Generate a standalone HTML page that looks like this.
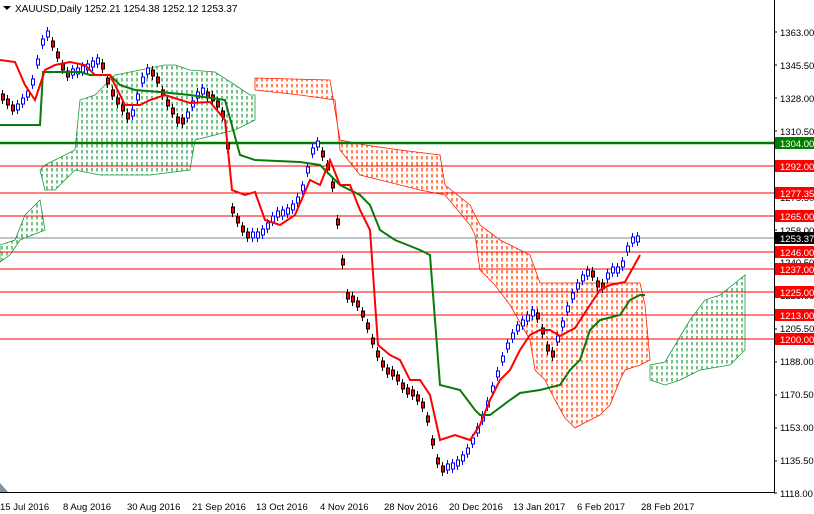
<!DOCTYPE html>
<html><head><meta charset="utf-8"><style>
html,body{margin:0;padding:0;background:#fff;}
svg{display:block;font-family:"Liberation Sans",sans-serif;}
</style></head><body>
<svg width="814" height="514" xmlns="http://www.w3.org/2000/svg">
<defs>
<pattern id="po" width="5" height="6" patternUnits="userSpaceOnUse"><line x1="2" y1="0" x2="2" y2="3.5" stroke="#ff4500" stroke-width="1.3"/></pattern>
<pattern id="pg" width="5" height="6" patternUnits="userSpaceOnUse"><line x1="2" y1="0" x2="2" y2="3.5" stroke="#1a9a3a" stroke-width="1.2"/></pattern>
</defs>
<rect width="814" height="514" fill="#fff"/>
<polygon fill="url(#pg)" stroke="#1a9a3a" stroke-width="0.8" points="40,170 45,165 75,150 80,100 95,95 115,75 140,70 165,65 175,65 190,70 215,72 235,85 250,95 255,95 255,120 235,130 195,140 190,170 150,175 100,175 75,170 55,190 45,190"/>
<polygon fill="url(#pg)" stroke="#1a9a3a" stroke-width="0.8" points="0,245 15,240 25,215 40,200 45,230 20,240 10,255 0,262"/>
<polygon fill="url(#po)" stroke="#ff2000" stroke-width="0.8" points="255,78 330,80 340,140 365,145 400,150 440,155 445,185 470,205 480,225 500,240 530,255 540,283 640,283 645,305 650,360 640,365 625,370 620,380 610,405 600,415 590,420 575,428 565,418 555,400 545,380 535,370 530,340 510,305 495,285 480,270 475,235 470,225 445,195 420,190 380,180 360,175 340,150 335,100 300,95 255,90"/>
<polygon fill="url(#pg)" stroke="#1a9a3a" stroke-width="0.8" points="650,365 665,362 690,320 705,300 720,295 745,275 745,350 730,365 700,370 680,380 665,385 650,380"/>
<g stroke="#ff0000" stroke-width="1">
<line x1="0" y1="166" x2="775" y2="166"/><line x1="0" y1="193" x2="775" y2="193"/>
<line x1="0" y1="216" x2="775" y2="216"/><line x1="0" y1="252" x2="775" y2="252"/>
<line x1="0" y1="269" x2="775" y2="269"/><line x1="0" y1="292" x2="775" y2="292"/>
<line x1="0" y1="315" x2="775" y2="315"/><line x1="0" y1="339" x2="775" y2="339"/>
</g>
<line x1="0" y1="143" x2="775" y2="143" stroke="#007a00" stroke-width="2.5"/>
<line x1="0" y1="238" x2="775" y2="238" stroke="#7a8a99" stroke-width="1"/>
<!-- candles -->
<path fill="none" stroke="#000" d="M2.5 90v14M7.5 95v14M12.5 101v14M52.5 37v14M57.5 48v14M62.5 60v14M67.5 67v14M102.5 59v14M107.5 74v14M112.5 86v14M117.5 94v14M122.5 101v14M127.5 109v14M152.5 66v14M157.5 73v14M162.5 86v14M167.5 96v14M172.5 104v14M177.5 113v14M182.5 114v14M207.5 88v14M212.5 91v14M217.5 97v14M222.5 107v14M227.5 139v14M232.5 203v14M237.5 213v14M242.5 222v14M247.5 228v14M322.5 147v14M327.5 160v14M332.5 178v14M337.5 215v14M342.5 255v14M347.5 289v14M352.5 292v14M357.5 297v14M362.5 307v14M367.5 319v14M372.5 334v14M377.5 347v14M382.5 357v14M387.5 364v14M392.5 366v14M397.5 371v14M402.5 379v14M407.5 384v14M412.5 386v14M417.5 391v14M422.5 398v14M427.5 412v14M432.5 435v14M437.5 454v14M442.5 462v14M537.5 309v14M542.5 324v14M547.5 341v14M552.5 347v14M592.5 267v14M597.5 277v14M602.5 279v14"/>
<path fill="#ff0000" stroke="#000" d="M1.5 94h3v6h-3zM6.5 99h3v6h-3zM11.5 105h3v6h-3zM51.5 41h3v6h-3zM56.5 52h3v6h-3zM61.5 64h3v6h-3zM66.5 71h3v6h-3zM101.5 63h3v6h-3zM106.5 78h3v6h-3zM111.5 90h3v6h-3zM116.5 98h3v6h-3zM121.5 105h3v6h-3zM126.5 113h3v6h-3zM151.5 70h3v6h-3zM156.5 77h3v6h-3zM161.5 90h3v6h-3zM166.5 100h3v6h-3zM171.5 108h3v6h-3zM176.5 117h3v6h-3zM181.5 118h3v6h-3zM206.5 92h3v6h-3zM211.5 95h3v6h-3zM216.5 101h3v6h-3zM221.5 111h3v6h-3zM226.5 143h3v6h-3zM231.5 207h3v6h-3zM236.5 217h3v6h-3zM241.5 226h3v6h-3zM246.5 232h3v6h-3zM321.5 151h3v6h-3zM326.5 164h3v6h-3zM331.5 182h3v6h-3zM336.5 219h3v6h-3zM341.5 259h3v6h-3zM346.5 293h3v6h-3zM351.5 296h3v6h-3zM356.5 301h3v6h-3zM361.5 311h3v6h-3zM366.5 323h3v6h-3zM371.5 338h3v6h-3zM376.5 351h3v6h-3zM381.5 361h3v6h-3zM386.5 368h3v6h-3zM391.5 370h3v6h-3zM396.5 375h3v6h-3zM401.5 383h3v6h-3zM406.5 388h3v6h-3zM411.5 390h3v6h-3zM416.5 395h3v6h-3zM421.5 402h3v6h-3zM426.5 416h3v6h-3zM431.5 439h3v6h-3zM436.5 458h3v6h-3zM441.5 466h3v6h-3zM536.5 313h3v6h-3zM541.5 328h3v6h-3zM546.5 345h3v6h-3zM551.5 351h3v6h-3zM591.5 271h3v6h-3zM596.5 281h3v6h-3zM601.5 283h3v6h-3z"/>
<path fill="none" stroke="#0000ff" d="M17.5 100v14M22.5 94v14M27.5 87v14M32.5 75v14M37.5 55v14M42.5 35v14M47.5 27v14M72.5 65v14M77.5 64v14M82.5 62v14M87.5 60v14M92.5 57v14M97.5 54v14M132.5 106v14M137.5 90v14M142.5 73v14M147.5 64v14M187.5 108v14M192.5 97v14M197.5 88v14M202.5 84v14M252.5 228v14M257.5 228v14M262.5 225v14M267.5 219v14M272.5 212v14M277.5 207v14M282.5 206v14M287.5 204v14M292.5 200v14M297.5 193v14M302.5 181v14M307.5 163v14M312.5 144v14M317.5 137v14M447.5 460v14M452.5 459v14M457.5 456v14M462.5 451v14M467.5 444v14M472.5 434v14M477.5 423v14M482.5 411v14M487.5 397v14M492.5 382v14M497.5 367v14M502.5 352v14M507.5 339v14M512.5 329v14M517.5 321v14M522.5 316v14M527.5 311v14M532.5 306v14M557.5 332v14M562.5 317v14M567.5 302v14M572.5 289v14M577.5 279v14M582.5 271v14M587.5 266v14M607.5 269v14M612.5 263v14M617.5 263v14M622.5 257v14M627.5 242v14M632.5 233v14M637.5 232v14"/>
<path fill="#fff" stroke="#0000ff" d="M16.5 104h3v6h-3zM21.5 98h3v6h-3zM26.5 91h3v6h-3zM31.5 79h3v6h-3zM36.5 59h3v6h-3zM41.5 39h3v6h-3zM46.5 31h3v6h-3zM71.5 69h3v6h-3zM76.5 68h3v6h-3zM81.5 66h3v6h-3zM86.5 64h3v6h-3zM91.5 61h3v6h-3zM96.5 58h3v6h-3zM131.5 110h3v6h-3zM136.5 94h3v6h-3zM141.5 77h3v6h-3zM146.5 68h3v6h-3zM186.5 112h3v6h-3zM191.5 101h3v6h-3zM196.5 92h3v6h-3zM201.5 88h3v6h-3zM251.5 232h3v6h-3zM256.5 232h3v6h-3zM261.5 229h3v6h-3zM266.5 223h3v6h-3zM271.5 216h3v6h-3zM276.5 211h3v6h-3zM281.5 210h3v6h-3zM286.5 208h3v6h-3zM291.5 204h3v6h-3zM296.5 197h3v6h-3zM301.5 185h3v6h-3zM306.5 167h3v6h-3zM311.5 148h3v6h-3zM316.5 141h3v6h-3zM446.5 464h3v6h-3zM451.5 463h3v6h-3zM456.5 460h3v6h-3zM461.5 455h3v6h-3zM466.5 448h3v6h-3zM471.5 438h3v6h-3zM476.5 427h3v6h-3zM481.5 415h3v6h-3zM486.5 401h3v6h-3zM491.5 386h3v6h-3zM496.5 371h3v6h-3zM501.5 356h3v6h-3zM506.5 343h3v6h-3zM511.5 333h3v6h-3zM516.5 325h3v6h-3zM521.5 320h3v6h-3zM526.5 315h3v6h-3zM531.5 310h3v6h-3zM556.5 336h3v6h-3zM561.5 321h3v6h-3zM566.5 306h3v6h-3zM571.5 293h3v6h-3zM576.5 283h3v6h-3zM581.5 275h3v6h-3zM586.5 270h3v6h-3zM606.5 273h3v6h-3zM611.5 267h3v6h-3zM616.5 267h3v6h-3zM621.5 261h3v6h-3zM626.5 246h3v6h-3zM631.5 237h3v6h-3zM636.5 236h3v6h-3z"/>
<polyline fill="none" stroke="#0a7a0a" stroke-width="2" points="0,125 40,125 43,72 55,72 80,72 90,75 110,75 120,85 135,90 160,92 190,95 225,100 240,155 255,160 300,162 320,165 340,185 360,195 370,205 380,230 395,240 420,250 430,255 440,385 460,390 475,410 480,415 490,415 510,400 520,393 540,390 560,385 570,370 580,360 590,330 600,320 620,315 630,300 640,295 645,295"/>
<polyline fill="none" stroke="#ff0000" stroke-width="2" points="0,60 15,62 25,85 35,100 45,70 55,65 70,62 85,65 95,75 110,75 125,105 140,105 150,100 165,95 190,103 210,102 225,120 232,190 245,195 255,192 265,220 280,225 295,215 310,180 320,185 330,160 340,185 350,185 360,210 370,230 378,345 390,355 400,360 410,380 420,380 430,395 440,440 455,435 470,440 480,425 490,400 500,380 510,370 520,350 530,335 540,330 550,330 560,336 575,328 590,305 600,290 610,285 625,282 640,255"/>
<line x1="774.5" y1="0" x2="774.5" y2="493" stroke="#000"/>
<line x1="0" y1="492.5" x2="775" y2="492.5" stroke="#000"/>
<g font-size="9.5" fill="#000">
<text x="780" y="36">1363.00</text><text x="780" y="69">1345.50</text><text x="780" y="102">1328.00</text><text x="780" y="135">1310.50</text><text x="780" y="201">1275.50</text><text x="780" y="234">1258.00</text><text x="780" y="266">1240.50</text><text x="780" y="299">1223.00</text><text x="780" y="332">1205.50</text><text x="780" y="365">1188.00</text><text x="780" y="398">1170.50</text><text x="780" y="431">1153.00</text><text x="780" y="464">1135.50</text><text x="780" y="497">1118.00</text>
</g>
<g stroke="#000"><line x1="774" y1="32" x2="777" y2="32"/><line x1="774" y1="65" x2="777" y2="65"/><line x1="774" y1="98" x2="777" y2="98"/><line x1="774" y1="131" x2="777" y2="131"/><line x1="774" y1="230" x2="777" y2="230"/><line x1="774" y1="329" x2="777" y2="329"/><line x1="774" y1="362" x2="777" y2="362"/><line x1="774" y1="395" x2="777" y2="395"/><line x1="774" y1="428" x2="777" y2="428"/><line x1="774" y1="461" x2="777" y2="461"/><line x1="774" y1="493" x2="777" y2="493"/></g>
<g font-size="9.5" fill="#fff">
<rect x="775" y="137" width="39" height="12" fill="#008000"/><text x="780" y="147">1304.00</text>
<rect x="775" y="160" width="39" height="12" fill="#ff0000"/><text x="780" y="170">1292.00</text>
<rect x="775" y="187" width="39" height="12" fill="#ff0000"/><text x="780" y="197">1277.35</text>
<rect x="775" y="210" width="39" height="12" fill="#ff0000"/><text x="780" y="220">1265.00</text>
<rect x="775" y="232" width="39" height="12" fill="#000"/><text x="780" y="242">1253.37</text>
<rect x="775" y="246" width="39" height="12" fill="#ff0000"/><text x="780" y="256">1246.00</text>
<rect x="775" y="263" width="39" height="12" fill="#ff0000"/><text x="780" y="273">1237.00</text>
<rect x="775" y="286" width="39" height="12" fill="#ff0000"/><text x="780" y="296">1225.00</text>
<rect x="775" y="309" width="39" height="12" fill="#ff0000"/><text x="780" y="319">1213.00</text>
<rect x="775" y="333" width="39" height="12" fill="#ff0000"/><text x="780" y="343">1200.00</text>
</g>
<g font-size="9.5" fill="#000">
<text x="0" y="510">15 Jul 2016</text><text x="63" y="510">8 Aug 2016</text><text x="127" y="510">30 Aug 2016</text><text x="192" y="510">21 Sep 2016</text><text x="256" y="510">13 Oct 2016</text><text x="320" y="510">4 Nov 2016</text><text x="384" y="510">28 Nov 2016</text><text x="449" y="510">20 Dec 2016</text><text x="513" y="510">13 Jan 2017</text><text x="577" y="510">6 Feb 2017</text><text x="641" y="510">28 Feb 2017</text>
</g>
<polygon points="0,483 0,492 8,492" fill="#8090a0"/>
<polygon points="3,6 11,6 7,10" fill="#000"/>
<text x="15" y="12" font-size="10" fill="#000">XAUUSD,Daily  1252.21 1254.38 1252.12 1253.37</text>
</svg>
</body></html>
